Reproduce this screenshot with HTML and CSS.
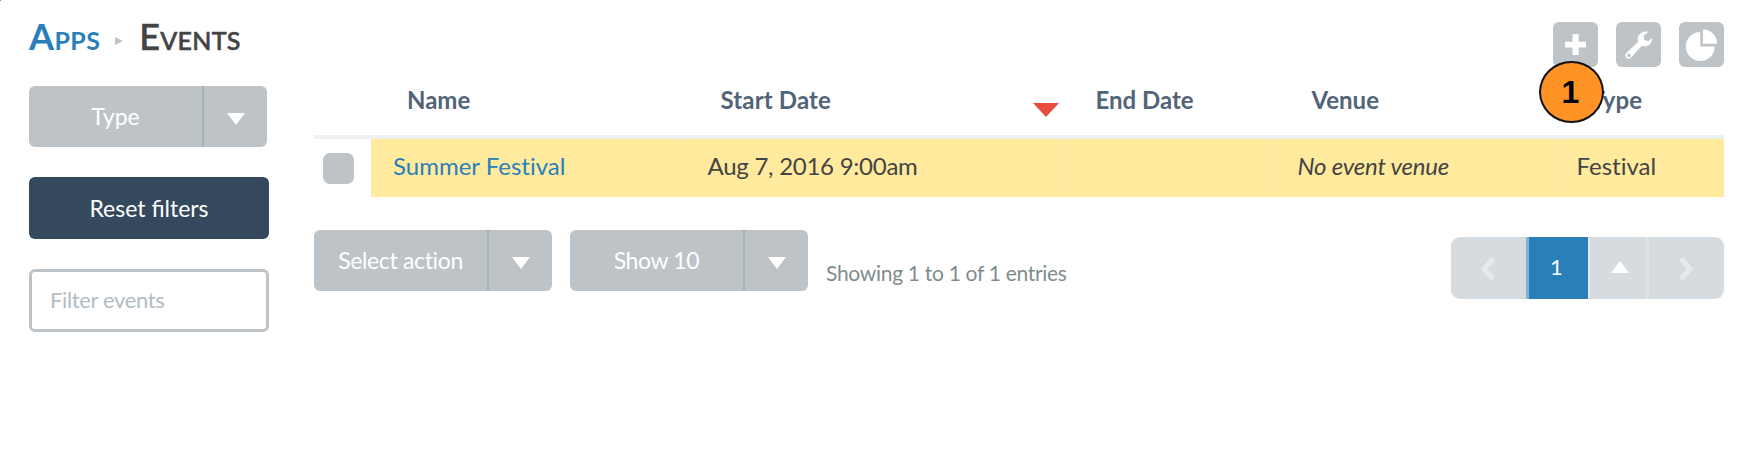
FILE: index.html
```
<!DOCTYPE html>
<html lang="en">
<head>
<meta charset="utf-8">
<title>Events</title>
<link rel="stylesheet" href="styles.css">
</head>
<body>
<div class="corner"></div>
<header class="topbar">
  <h1 class="crumbs"><a class="crumb-link" href="#">Apps</a><svg class="crumb-arrow" width="8" height="8" viewBox="0 0 8 8"><path d="M0 0L8 4L0 8z"/></svg><span class="crumb-current">Events</span></h1>
  <div class="tools">
    <button class="tool" aria-label="Add"><svg width="45" height="45" viewBox="0 0 45 45"><path d="M19.500 12h6.200v7.700h7.300v5.700h-7.300v7.600h-6.200v-7.600h-7.500v-5.700h7.500z"/></svg></button>
    <button class="tool" aria-label="Settings"><svg width="45" height="45" viewBox="0 0 45 45"><path fill-rule="evenodd" d="M32.200 10C25.500 8 20.200 14 22.100 20L10.400 31.100C8.900 32.500 8.900 34.500 10.300 35.800C11.600 37 13.600 37.200 15.100 35.500L25.900 23.700C31 26 36.500 22 36.200 16L32 19.300L28.200 17.800L27.500 13.800zM12.900 31.500a1.800 1.800 0 1 0 .01 0z"/></svg></button>
    <button class="tool" aria-label="Statistics"><svg width="45" height="45" viewBox="0 0 45 45"><path d="M21.300 10V24.500H35.800A14.500 14.500 0 1 1 21.300 10z"/><path d="M24 7.500A14.500 14.500 0 0 1 38.300 21.800H24z"/></svg></button>
    <span class="badge">1</span>
  </div>
</header>
<div class="page">
  <aside class="sidebar">
    <button class="split"><span class="split-label type-label">Type</span><span class="split-arrow"><svg class="down" width="18" height="12" viewBox="0 0 18 12"><path d="M0 0H18L9 12z"/></svg></span></button>
    <button class="reset">Reset filters</button>
    <input class="filter" type="text" placeholder="Filter events">
  </aside>
  <main class="content">
    <div class="row head">
      <span></span><span class="th">Name</span>
      <span class="th sorted">Start Date<svg width="26" height="14" viewBox="0 0 26 14"><path d="M0 0H26L13 14z"/></svg></span>
      <span class="th">End Date</span><span class="th">Venue</span><span class="th">Type</span>
    </div>
    <div class="row">
      <span class="check-cell"><span class="check"></span></span>
      <a class="td event-link" href="#">Summer Festival</a>
      <span class="td date">Aug 7, 2016 9:00am</span>
      <span class="td"></span>
      <em class="td venue">No event venue</em>
      <span class="td last">Festival</span>
    </div>
    <div class="footer">
      <button class="split"><span class="split-label">Select action</span><span class="split-arrow"><svg class="down" width="18" height="12" viewBox="0 0 18 12"><path d="M0 0H18L9 12z"/></svg></span></button>
      <button class="split"><span class="split-label">Show 10</span><span class="split-arrow"><svg class="down" width="18" height="12" viewBox="0 0 18 12"><path d="M0 0H18L9 12z"/></svg></span></button>
      <span class="info">Showing 1 to 1 of 1 entries</span>
      <nav class="pager">
        <span class="page-step"><svg width="16" height="24" viewBox="0 0 16 24"><path d="M13 2L4 12L13 22"/></svg></span>
        <span class="page-current">1</span>
        <span class="page-menu"><svg width="18" height="12" viewBox="0 0 18 12"><path d="M0 12L9 0L18 12z"/></svg></span>
        <span class="page-step next"><svg width="16" height="24" viewBox="0 0 16 24"><path d="M3 2L12 12L3 22"/></svg></span>
      </nav>
    </div>
  </main>
</div>
</body>
</html>
```
FILE: styles.css
```
* { box-sizing: border-box; }
body {
  margin: 0;
  padding: 21px 22px 0 29px;
  background: #fff;
  color: #444;
  font-family: Lato, "Liberation Sans", sans-serif;
  font-size: 24px;
  font-variant-ligatures: no-common-ligatures;
}
a { text-decoration: none; color: #2980b9; }
button, input { font-family: inherit; border: 0; padding: 0; margin: 0; }
.corner { position: absolute; left: 0; top: 0; width: 1px; height: 1px; background: #888; }

.topbar { display: flex; justify-content: space-between; height: 45px; }
.crumbs {
  display: flex;
  align-items: center;
  height: 30px;
  margin: 0;
  font-size: 36px;
  line-height: 30px;
  font-weight: 700;
  font-variant-caps: small-caps;
}
.crumb-link { letter-spacing: .4px; }
.crumb-arrow { margin: 9px 16px 0 15px; fill: #bdc3c7; }
.crumb-current { font-weight: 500; letter-spacing: .25px; -webkit-text-stroke: .6px #444; }
.tools { position: relative; display: flex; gap: 18px; padding-top: .5px; }
.tool { width: 45px; height: 45px; border-radius: 6px; background: #bdc3c7; }
.tool svg { display: block; fill: #fff; }
.badge {
  position: absolute;
  left: -14px;
  top: 40px;
  width: 65px;
  height: 62px;
  padding-right: 2px;
  border: 2px solid #111;
  border-radius: 50%;
  background: #ff9326;
  color: #000;
  font: bold 32px/58px "Liberation Sans", Arial, sans-serif;
  text-align: center;
}

.page { display: flex; gap: 45px; }
.sidebar { display: flex; flex-direction: column; gap: 30px; width: 240px; padding-top: 20px; }
.split {
  display: flex;
  width: 238px;
  height: 61px;
  border-radius: 6px;
  background: #bdc3c7;
  color: #fff;
  font-size: 23px;
  letter-spacing: -.35px;
  line-height: 61px;
  text-align: center;
}
.split-label { width: 173px; }
.type-label { letter-spacing: 0; }
.split-arrow {
  display: flex;
  flex: 1;
  height: 61px;
  align-items: center;
  justify-content: center;
  border-left: 2px solid #a7b1b8;
  padding-top: 4px;
}
.down { fill: #fff; }
.reset {
  height: 62px;
  border-radius: 6px;
  background: #34495e;
  color: #fff;
  font-size: 23px;
  font-variant-ligatures: common-ligatures;
}
.filter {
  width: 240px;
  height: 63px;
  padding: 0 18px 2px;
  border: 3px solid #bdc3c7;
  border-radius: 6px;
  font-size: 22px;
  letter-spacing: -.35px;
  color: #34495e;
}
.filter::placeholder { color: #b2bcc5; opacity: 1; }

.content { flex: 1; }
.row { display: grid; grid-template-columns: 57px 313.500px 375px 216px 279px 1fr; height: 58px; }
.head { height: 73px; border-bottom: 4px solid #ecf0f1; }
.th {
  padding-left: 36px;
  color: #526478;
  font-weight: 700;
  line-height: 67px;
}
.sorted { display: flex; justify-content: space-between; align-items: flex-start; letter-spacing: .15px; }
.sorted svg { margin: 37px 1px 0 0; fill: #e74c3c; }
.td {
  padding-left: 22px;
  background: #ffea9e;
  border-right: 1px solid #ffecac;
  line-height: 54px;
}
.date { letter-spacing: -.26px; padding-left: 23px; }
.venue { letter-spacing: -.2px; }
.last { border-right: 0; }
.check-cell { padding: 13.500px 9px; }
.check { display: block; width: 31px; height: 31px; border-radius: 7px; background: #bdc3c7; }

.footer { display: flex; align-items: flex-start; padding-top: 33px; }
.footer .split { margin-right: 18px; }
.info { color: #7f8c8d; font-size: 21px; letter-spacing: -.3px; line-height: 85px; }
.pager {
  display: flex;
  width: 273px;
  height: 62px;
  margin: 7px 0 0 auto;
  border-radius: 9px;
  overflow: hidden;
  background: #d6dbdf;
  line-height: 60px;
}
.pager span { display: flex; align-items: center; justify-content: center; }
.pager .page-step { width: 75px; padding: 2px 2px 0 0; }
.page-step path { fill: none; stroke: #e7eaed; stroke-width: 5; }
.pager .page-current { width: 62px; padding: 0 4px 2px 0; border-left: 3px solid #83b3d4; background: #2980b9; color: #fff; font-size: 22px; }
.pager .page-menu { width: 61px; padding: 0 0 3px 3px; border-left: 2px solid #e2e6e9; border-right: 3px solid #dfe3e6; }
.page-menu path { fill: #fff; }
.pager .next { padding: 2px 2px 0 0; }
```
